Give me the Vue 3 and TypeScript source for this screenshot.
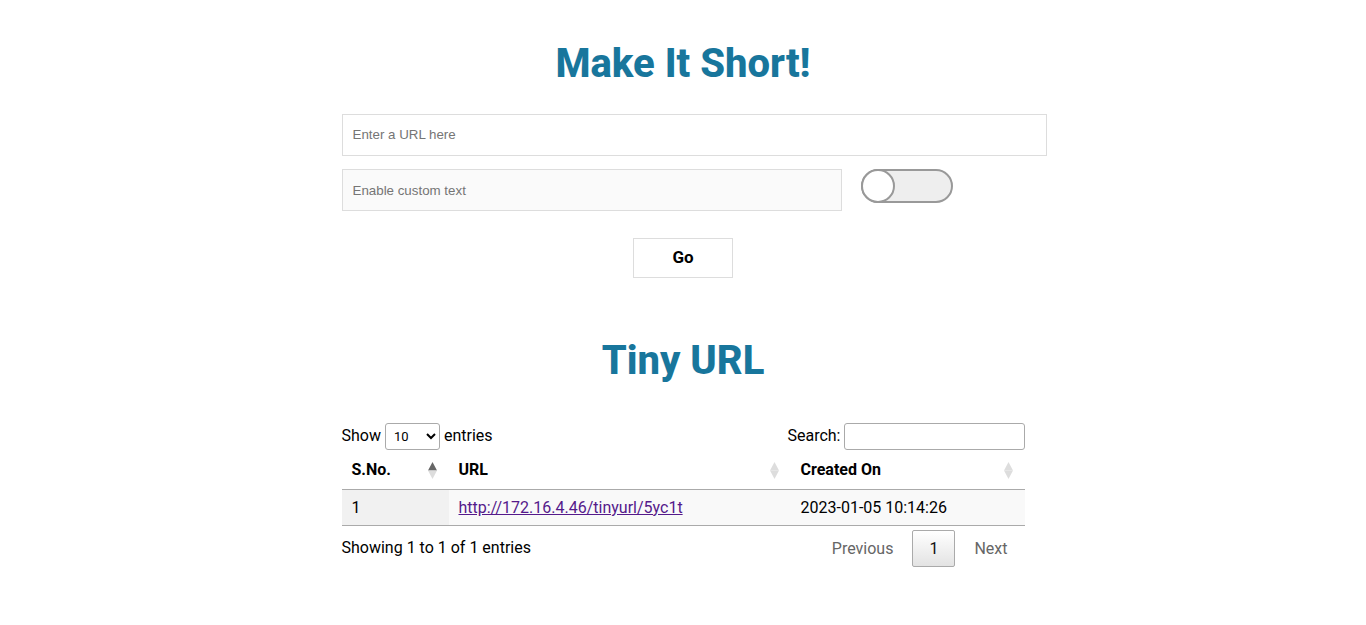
<script setup lang="ts">
import { computed, ref } from 'vue'

interface Entry {
  id: number
  url: string
  created: string
}

const longUrl = ref('')
const customText = ref('')
const customEnabled = ref(false)
const pageSize = ref(10)
const search = ref('')

const entries = ref<Entry[]>([
  { id: 1, url: 'http://172.16.4.46/tinyurl/5yc1t', created: '2023-01-05 10:14:26' },
])

const columns = [
  { key: 'id', label: 'S.No.', sorted: true },
  { key: 'url', label: 'URL', sorted: false },
  { key: 'created', label: 'Created On', sorted: false },
]

const rows = computed(() =>
  entries.value
    .filter((e) => `${e.id} ${e.url} ${e.created}`.includes(search.value))
    .slice(0, pageSize.value),
)
</script>

<template>
  <main class="page">
    <h1 class="title">Make It Short!</h1>
    <form class="form" @submit.prevent>
      <input v-model="longUrl" class="field wide" type="text" placeholder="Enter a URL here" aria-label="URL" />
      <div class="custom">
        <input
          v-model="customText"
          class="field"
          type="text"
          placeholder="Enable custom text"
          aria-label="Custom text"
          :disabled="!customEnabled"
        />
        <label class="switch">
          <input v-model="customEnabled" type="checkbox" aria-label="Enable custom text" />
          <span class="knob"></span>
        </label>
      </div>
      <button class="go" type="submit">Go</button>
    </form>

    <h1 class="title">Tiny URL</h1>
    <section class="list">
      <div class="bar">
        <label class="control">
          <span>Show</span>
          <select v-model.number="pageSize" class="box size">
            <option :value="10">10</option>
            <option :value="25">25</option>
            <option :value="50">50</option>
            <option :value="100">100</option>
          </select>
          <span>entries</span>
        </label>
        <label class="control find"><span>Search:</span><input v-model="search" class="box search" type="search" /></label>
      </div>
      <table class="table">
        <thead>
          <tr>
            <th v-for="c in columns" :key="c.key" :class="c.key" scope="col">
              <div class="head">
                {{ c.label }}
                <svg class="sort" width="9" height="17" viewBox="0 0 9 17" aria-hidden="true">
                  <path d="M4.5 0 9 8.5H0z" :fill="c.sorted ? '#666' : '#ddd'" />
                  <path d="M0 8.5h9L4.5 17z" fill="#ddd" />
                </svg>
              </div>
            </th>
          </tr>
        </thead>
        <tbody>
          <tr v-for="r in rows" :key="r.id">
            <td class="sorted">{{ r.id }}</td>
            <td><a class="link" href="#">{{ r.url }}</a></td>
            <td>{{ r.created }}</td>
          </tr>
        </tbody>
      </table>
      <div class="foot">
        <span class="info">Showing 1 to {{ rows.length }} of {{ entries.length }} entries</span>
        <nav class="pager">
          <button class="page-btn" type="button" disabled>Previous</button>
          <button class="page-btn current" type="button">1</button>
          <button class="page-btn" type="button" disabled>Next</button>
        </nav>
      </div>
    </section>
  </main>
</template>

<style>
body {
  margin: 0;
  background: #fff;
}
</style>

<style scoped>
.page {
  width: 50%;
  margin: 0 auto;
  padding-top: 38px;
  font-family: Roboto, sans-serif;
  font-size: 16px;
  line-height: 20px;
  color: #000;
}
.title {
  margin: 0;
  font-size: 40px;
  line-height: 52px;
  font-weight: 800;
  text-align: center;
  color: #18769c;
}
.form {
  display: flex;
  flex-direction: column;
  margin: 24px 0 57px;
}
.field {
  box-sizing: border-box;
  width: 500px;
  height: 42px;
  padding: 0 10px;
  border: 1px solid #ddd;
  background: #fff;
  font-family: "Liberation Sans", Arial, sans-serif;
}
.field::placeholder {
  color: #757575;
}
.field:disabled {
  background: #fafafa;
}
.wide {
  width: calc(100% + 22px);
  padding-bottom: 2px;
}
.custom {
  display: flex;
  align-items: flex-start;
  gap: 19px;
  margin-top: 13px;
}
.switch {
  display: flex;
  box-sizing: border-box;
  width: 92px;
  height: 34px;
  border: 2px solid #999;
  border-radius: 17px;
  background: #eee;
  cursor: pointer;
}
.switch input {
  appearance: none;
  width: 0;
  height: 0;
  margin: 0;
}
.knob {
  box-sizing: border-box;
  width: 34px;
  height: 34px;
  margin: -2px;
  border: 2px solid #999;
  border-radius: 50%;
  background: #fff;
}
.switch input:checked + .knob {
  margin-left: auto;
}
.go {
  align-self: center;
  width: 100px;
  height: 40px;
  margin-top: 27px;
  padding: 0 0 2px;
  border: 1px solid #ddd;
  background: #fff;
  font-family: inherit;
  font-size: 17px;
  font-weight: 700;
  color: #000;
}
.list {
  margin-top: 36px;
}
.bar {
  display: flex;
  justify-content: space-between;
}
.control {
  display: flex;
  align-items: center;
  gap: 4px;
}
.find {
  gap: 3px;
}
.control span {
  padding-bottom: 2px;
}
.box {
  box-sizing: border-box;
  height: 27px;
  padding: 4px;
  border: 1px solid #aaa;
  border-radius: 3px;
  background: #fff;
  font-family: inherit;
  font-size: 13px;
  color: #000;
}
.size {
  width: 55px;
}
.search {
  width: 181px;
}
.table {
  width: 100%;
  border-collapse: separate;
  border-spacing: 0;
  border-bottom: 1px solid #aaa;
}
.table th {
  padding: 10px 12px 9px 10px;
  border-bottom: 1px solid #aaa;
  font-weight: 700;
  text-align: left;
}
.id {
  width: 85px;
}
.created {
  width: 212px;
}
.head {
  display: flex;
  align-items: center;
  justify-content: space-between;
}
.table td {
  padding: 8px 10px 7px;
  background: #f9f9f9;
}
.table .sorted {
  background: #f1f1f1;
}
.link {
  color: #551a8b;
}
.foot {
  display: flex;
  align-items: center;
  justify-content: space-between;
  margin-top: 4px;
}
.info {
  padding-bottom: 2px;
}
.pager {
  display: flex;
  gap: 2px;
}
.page-btn {
  height: 37px;
  padding: 0 16px;
  border: 1px solid transparent;
  border-radius: 2px;
  background: transparent;
  font-family: inherit;
  font-size: 16px;
  color: #666;
}
.current {
  border-color: #aaa;
  background: linear-gradient(to bottom, #fff 0%, #e3e3e3 100%);
  color: #111;
}
</style>
